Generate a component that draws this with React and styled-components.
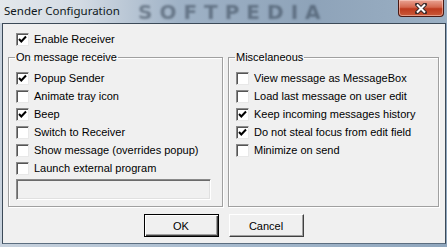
import React from 'react'
import styled, { createGlobalStyle } from 'styled-components'

const Global = createGlobalStyle`
  html, body { margin: 0; padding: 0; background: #fff; }
  #root { width: 447px; height: 247px; overflow: hidden; }
`

const Window = styled.div`
  width: 447px;
  height: 247px;
  display: flex;
  flex-direction: column;
  background: linear-gradient(90deg, #c9d3de 0%, #a9bccf 45%, #8fa6bd 100%);
  font-family: "Liberation Sans", Arial, sans-serif;
  font-size: 11px;
  color: #000;
`

const TitleBar = styled.div`
  position: relative;
  height: 23px;
  flex: none;
  display: flex;
  align-items: flex-start;
  justify-content: space-between;
  background: linear-gradient(90deg, #e4e8ec 0%, #d2dae3 18%, #9fb2c6 40%, #8ea3b9 70%, #9bb0c4 100%);
  overflow: hidden;
`

const Title = styled.span`
  padding: 3px 0 0 4px;
  font-family: "Noto Sans", "Open Sans", sans-serif;
  font-size: 11.5px;
  color: #101820;
  position: relative;
  z-index: 1;
`

const Watermark = styled.span`
  position: absolute;
  left: 138px;
  top: 1px;
  line-height: 22px;
  font-family: "DejaVu Sans", sans-serif;
  font-weight: bold;
  font-size: 20px;
  letter-spacing: 7px;
  color: rgba(45, 60, 75, 0.5);
  filter: blur(1.2px);
`

const CloseButton = styled.div`
  position: relative;
  z-index: 1;
  width: 44px;
  height: 16px;
  margin-right: 3px;
  border: 1px solid #4a1a14;
  border-top: none;
  border-radius: 0 0 4px 4px;
  background: linear-gradient(180deg, #e9a393 0%, #d4684f 45%, #bd3a1e 55%, #c95a3a 100%);
  box-shadow: inset 0 0 0 1px rgba(255, 220, 210, 0.5);
  display: flex;
  align-items: center;
  justify-content: center;
`

const Frame = styled.div`
  flex: 1;
  display: flex;
  padding: 0 2px 3px 2px;
`

const Client = styled.div`
  flex: 1;
  display: flex;
  flex-direction: column;
  background: #f0f0f0;
  border: 1px solid #3c4a58;
  border-bottom-color: #5c6e80;
  padding: 6px 6px 0 5px;
`

const Row = styled.label`
  display: flex;
  align-items: center;
  height: 18px;
  gap: 5px;
  padding-left: ${p => p.$indent || 0}px;
  white-space: nowrap;
`

const Box = styled.span`
  width: 13px;
  height: 13px;
  box-sizing: border-box;
  flex: none;
  background: #fff;
  border-top: 1px solid #8a8a8a;
  border-left: 1px solid #8a8a8a;
  border-right: 1px solid #e8e8e8;
  border-bottom: 1px solid #e8e8e8;
  box-shadow: inset 1px 1px 0 #555;
  display: flex;
  align-items: center;
  justify-content: center;
`

const Groups = styled.div`
  display: flex;
  gap: 5px;
  margin-top: 3px;
`

const Group = styled.fieldset`
  margin: 0;
  width: ${p => p.$w}px;
  height: 156px;
  box-sizing: border-box;
  padding: 5px 0 0 0;
  border: 1px solid #a0a0a0;
  box-shadow: inset 1px 1px 0 #fff, 1px 1px 0 #fff;
  display: flex;
  flex-direction: column;
`

const Legend = styled.legend`
  padding: 0 1px;
  margin-left: 6px;
  line-height: 13px;
`

const Edit = styled.div`
  margin: 2px 0 0 7px;
  width: 195px;
  height: 21px;
  box-sizing: border-box;
  background: #f0f0f0;
  border-top: 1px solid #8a8a8a;
  border-left: 1px solid #8a8a8a;
  border-right: 1px solid #fff;
  border-bottom: 1px solid #fff;
  box-shadow: inset 1px 1px 0 #6a6a6a, inset -1px -1px 0 #e0e0e0;
`

const Buttons = styled.div`
  display: flex;
  justify-content: center;
  gap: 10px;
  margin-top: 7px;
`

const Button = styled.div`
  width: 75px;
  height: 23px;
  box-sizing: border-box;
  display: flex;
  align-items: center;
  justify-content: center;
  background: #f0f0f0;
  border: 1px solid ${p => (p.$default ? '#000' : '#fff')};
  border-right-color: ${p => (p.$default ? '#000' : '#404040')};
  border-bottom-color: ${p => (p.$default ? '#000' : '#404040')};
  box-shadow: ${p =>
    p.$default
      ? 'inset 1px 1px 0 #fff, inset -1px -1px 0 #404040, inset -2px -2px 0 #a0a0a0'
      : 'inset -1px -1px 0 #a0a0a0'};
`

const Check = ({ on }) => (
  <Box>
    {on && (
      <svg width="9" height="9" viewBox="0 0 9 9">
        <path d="M1 4 L3.3 6.5 L8 1.5" fill="none" stroke="#000" strokeWidth="2" />
      </svg>
    )}
  </Box>
)

const Item = ({ on, children, indent }) => (
  <Row $indent={indent}>
    <Check on={on} />
    <span>{children}</span>
  </Row>
)

const left = [
  ['Popup Sender', true],
  ['Animate tray icon', false],
  ['Beep', true],
  ['Switch to Receiver', false],
  ['Show message (overrides popup)', false],
  ['Launch external program', false],
]

const right = [
  ['View message as MessageBox', false],
  ['Load last message on user edit', false],
  ['Keep incoming messages history', true],
  ['Do not steal focus from edit field', true],
  ['Minimize on send', false],
]

export default function App() {
  return (
    <>
      <Global />
      <Window>
        <TitleBar>
          <Title>Sender Configuration</Title>
          <Watermark>SOFTPEDIA</Watermark>
          <CloseButton>
            <svg width="12" height="11" viewBox="0 0 12 11">
              <path d="M2 1.5 L10 9.5 M10 1.5 L2 9.5" stroke="#3a2a2a" strokeWidth="4" strokeLinecap="round" />
              <path d="M2 1.5 L10 9.5 M10 1.5 L2 9.5" stroke="#fff" strokeWidth="2" />
            </svg>
          </CloseButton>
        </TitleBar>
        <Frame>
          <Client>
            <Item on indent={8}>Enable Receiver</Item>
            <Groups>
              <Group $w={215}>
                <Legend>On message receive</Legend>
                {left.map(([t, on]) => (
                  <Item key={t} on={on} indent={7}>{t}</Item>
                ))}
                <Edit />
              </Group>
              <Group $w={211}>
                <Legend>Miscelaneous</Legend>
                {right.map(([t, on]) => (
                  <Item key={t} on={on} indent={7}>{t}</Item>
                ))}
              </Group>
            </Groups>
            <Buttons>
              <Button $default>OK</Button>
              <Button>Cancel</Button>
            </Buttons>
          </Client>
        </Frame>
      </Window>
    </>
  )
}
